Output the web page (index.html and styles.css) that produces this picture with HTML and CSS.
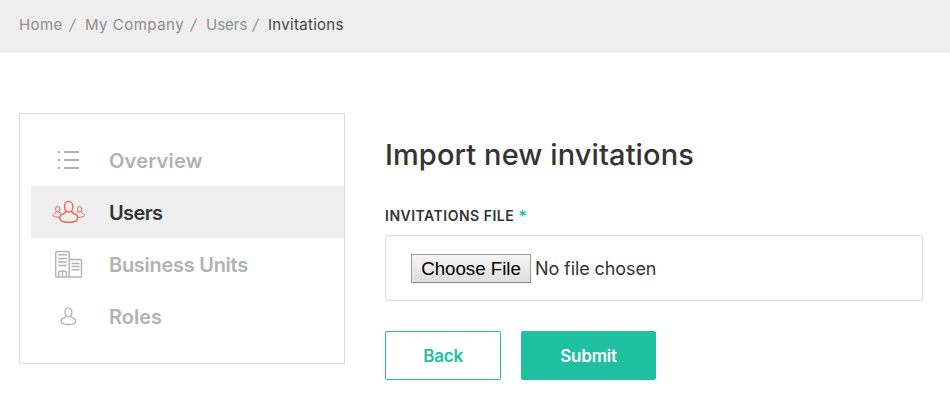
FILE: index.html
```html
<!DOCTYPE html>
<html lang="en">
<head>
<meta charset="utf-8">
<title>Import new invitations</title>
<link rel="stylesheet" href="styles.css">
</head>
<body>
<nav class="breadcrumb">
  <span class="crumb crumb-home">Home<span class="slash">/</span></span>
  <span class="crumb crumb-company">My Company<span class="slash">/</span></span>
  <span class="crumb crumb-users">Users<span class="slash">/</span></span>
  <span class="crumb crumb-current">Invitations</span>
</nav>
<div class="layout">
  <aside class="sidebar">
    <a class="item">
      <svg class="icon" viewBox="0 0 36 36" width="36" height="36"><path d="M7 10h2M7 18h2M7 26h2M13 10h15M13 18h15M13 26h15" stroke-width="2"/></svg>
      <span class="name overview">Overview</span>
    </a>
    <a class="item active">
      <svg class="icon" viewBox="0 0 36 36" width="36" height="36">
        <g stroke-width="1.4"><ellipse cx="17.7" cy="12.700" rx="4.200" ry="5.300"/><path d="M14.500 16.800c.3 2-.6 2.500-2.400 3-2.300.7-3.400 2.200-3.400 4.200 0 2.900 4.200 4.300 9 4.300s9-1.400 9-4.300c0-2-1.100-3.500-3.400-4.200-1.800-.5-2.700-1-2.400-3"/></g>
        <g stroke-width="1"><ellipse cx="6.700" cy="15.200" rx="2.200" ry="2.800"/><path d="M5.200 17.400c.1 1-.4 1.400-1.300 1.700-1.200.4-1.900 1.200-1.900 2.200 0 1.500 2.700 2 6.700 1.900M8.200 17.400c-.1 1 .4 1.400 1.700 1.800"/><ellipse cx="28.700" cy="15.200" rx="2.200" ry="2.800"/><path d="M30.200 17.400c-.1 1 .4 1.400 1.300 1.700 1.200.4 1.900 1.200 1.900 2.200 0 1.500-2.700 2-6.700 1.900M27.200 17.400c.1 1-.4 1.400-1.700 1.800"/></g>
      </svg>
      <span class="name users">Users</span>
    </a>
    <a class="item">
      <svg class="icon" viewBox="0 0 36 36" width="36" height="36">
        <g stroke-width="1.400"><rect x="4.700" y="5.500" width="13.500" height="25.500" rx="1"/><path d="M18.200 13.500h11.300a1 1 0 0 1 1 1v15.500a1 1 0 0 1-1 1h-11.300"/><path d="M7.200 8.700h8.500M7.200 12.500h8.500M7.200 16h8.500M7.200 19.500h8.500M20.500 17.500h8M20.500 20.500h8M20.500 23.700h8"/><path d="M7.700 30.500v-4a1.300 1.300 0 0 1 1.300-1.300h5a1.300 1.300 0 0 1 1.300 1.300v4M11.500 25.500v5"/></g>
      </svg>
      <span class="name units">Business Units</span>
    </a>
    <a class="item">
      <svg class="icon" viewBox="0 0 36 36" width="36" height="36"><g stroke-width="1.300"><ellipse cx="17.400" cy="14.300" rx="3.500" ry="4.400"/><path d="M14.800 17.700c.2 1.500-.5 2-2 2.500-2 .6-2.700 1.700-2.700 3.100 0 2.200 3.300 3.200 7.300 3.200s7.300-1 7.300-3.200c0-1.400-.7-2.500-2.700-3.100-1.500-.5-2.200-1-2-2.500"/></g></svg>
      <span class="name roles">Roles</span>
    </a>
  </aside>
  <main class="content">
    <h1 class="title">Import new invitations</h1>
    <div class="label"><span>INVITATIONS FILE</span><span class="star">*</span></div>
    <div class="filebox">
      <button class="choose" type="button">Choose File</button>
      <span class="status">No file chosen</span>
    </div>
    <div class="actions">
      <button class="btn back" type="button">Back</button>
      <button class="btn submit" type="button">Submit</button>
    </div>
  </main>
</div>
</body>
</html>
```
FILE: styles.css
```css
* { box-sizing: border-box; }
body {
  margin: 0;
  background: #fff;
  color: #333;
  font-family: Inter, "Liberation Sans", sans-serif;
}
.breadcrumb {
  display: flex;
  height: 53px;
  padding: 0 0 5px 19px;
  align-items: center;
  background: #efefef;
  color: #8e8e8e;
  font-size: 15px;
}
.crumb { display: flex; justify-content: space-between; white-space: nowrap; }
.slash { letter-spacing: 0; transform: skewX(-12deg); }
.crumb-home { width: 56px; margin-right: 10px; letter-spacing: .4px; }
.crumb-company { width: 111px; margin-right: 10px; letter-spacing: .5px; }
.crumb-users { width: 52px; margin-right: 10px; }
.crumb-current { color: #444; letter-spacing: .3px; }
.layout { display: flex; align-items: flex-start; padding: 60px 27px 0 19px; }
.sidebar {
  width: 326px;
  height: 251px;
  padding: 20px 0 0 11px;
  border: 1px solid #d9dce3;
}
.item {
  display: flex;
  height: 52px;
  padding-left: 20px;
  align-items: center;
  color: #b2b2b2;
}
.icon { flex: none; fill: none; stroke: #b2b2b2; }
.active { background: #efefef; color: #333; }
.active .icon { stroke: #f0634c; }
.name { margin-left: 22px; padding-top: 2px; font-size: 20px; line-height: 26px; font-weight: 600; white-space: nowrap; }
.active .name { font-weight: 600; }
.overview { letter-spacing: .2px; }
.users { letter-spacing: -.6px; }
.units { letter-spacing: -.28px; }
.content { flex: 1; margin-left: 40px; }
.title { height: 40px; margin: 22px 0 0; font-size: 29px; line-height: 39px; font-weight: 500; letter-spacing: .1px; white-space: nowrap; }
.label { display: flex; gap: 4px; height: 20px; margin: 31px 0 9px; font-size: 14px; line-height: 20px; font-weight: 600; letter-spacing: .5px; white-space: nowrap; }
.star { color: #1fbfa2; font-size: 16px; }
.filebox {
  display: flex;
  height: 66px;
  padding-left: 25px;
  align-items: center;
  border: 1px solid #d9dce3;
  border-radius: 2px;
}
.choose {
  width: 120px;
  height: 29px;
  padding: 0;
  border: 1px solid #999;
  border-bottom-color: #888;
  border-radius: 0;
  background: linear-gradient(#f6f6f6, #dedede);
  color: #000;
  font: 18.7px/25px "Liberation Sans", sans-serif;
}
.status { margin-left: 4px; font-size: 18px; letter-spacing: -.1px; white-space: nowrap; }
.actions { display: flex; gap: 20px; margin-top: 30px; }
.btn {
  height: 49px;
  padding: 0;
  border: 1px solid #1fbfa2;
  border-radius: 2px;
  font: 600 17px/24px Inter, sans-serif;
  letter-spacing: -.2px;
}
.back { width: 116px; background: #fff; color: #1fbfa2; }
.submit { width: 135px; background: #1fbfa2; color: #fff; }
```
